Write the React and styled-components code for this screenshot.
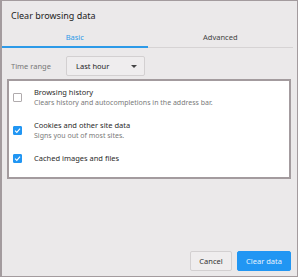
import React, { useState } from 'react';
import styled, { createGlobalStyle } from 'styled-components';

const GlobalStyle = createGlobalStyle`
  html, body {
    margin: 0;
    padding: 0;
    background: #ffffff;
  }
  body {
    font-family: "Noto Sans", "DejaVu Sans", sans-serif;
  }
`;

const Dialog = styled.div`
  display: flex;
  flex-direction: column;
  box-sizing: border-box;
  width: 298px;
  height: 277px;
  border: 1px solid #a39b9e;
  border-left-width: 2px;
  background: #ebe9ea;
`;

const Title = styled.div`
  height: 26px;
  padding-left: 9px;
  display: flex;
  align-items: center;
  padding-top: 3px;
  box-sizing: border-box;
  font-size: 9px;
  color: #222;
`;

const Tabs = styled.div`
  display: flex;
  margin-right: 4px;
  border-bottom: 1px solid #d6d3d4;
`;

const Tab = styled.div`
  flex: 1;
  height: 19px;
  display: flex;
  align-items: center;
  justify-content: center;
  font-size: 7.5px;
  color: ${p => (p.$active ? '#2d9ae8' : '#444')};
  border-bottom: 2px solid ${p => (p.$active ? '#2d9ae8' : 'transparent')};
  margin-bottom: -1px;
  cursor: pointer;
`;

const Body = styled.div`
  flex: 1;
  display: flex;
  flex-direction: column;
  padding: 8px 6px 0 5px;
`;

const TimeRow = styled.div`
  display: flex;
  align-items: center;
  padding-left: 4px;
`;

const Label = styled.span`
  width: 55px;
  font-size: 7.5px;
  color: #777;
`;

const Select = styled.div`
  box-sizing: border-box;
  width: 79px;
  height: 20px;
  display: flex;
  align-items: center;
  justify-content: space-between;
  padding: 0 7px 0 9px;
  border: 1px solid #d3d0d1;
  border-radius: 2px;
  background: #efedee;
  font-size: 7.5px;
  color: #222;
`;

const Arrow = styled.span`
  width: 0;
  height: 0;
  border-left: 3px solid transparent;
  border-right: 3px solid transparent;
  border-top: 3px solid #444;
`;

const List = styled.div`
  margin-top: 3px;
  box-sizing: border-box;
  height: 100px;
  border: 2px solid #a39b9e;
  background: #fff;
  display: flex;
  flex-direction: column;
  padding: 6px 0 0 2px;
  gap: 12px;
`;

const Row = styled.label`
  display: flex;
  align-items: center;
  cursor: pointer;
`;

const Box = styled.span`
  box-sizing: border-box;
  flex: none;
  width: 9px;
  height: 9px;
  margin: 0 12px 0 2px;
  border-radius: 1px;
  border: 1px solid ${p => (p.$checked ? '#2196f3' : '#b0abad')};
  background: ${p => (p.$checked ? '#2196f3' : '#fff')};
  display: flex;
  align-items: center;
  justify-content: center;
`;

const Text = styled.div`
  display: flex;
  flex-direction: column;
  gap: 1px;
`;

const Name = styled.span`
  font-size: 7.5px;
  color: #2a2a2a;
  line-height: 10px;
`;

const Desc = styled.span`
  font-size: 7px;
  color: #7a7a7a;
  line-height: 10px;
`;

const Footer = styled.div`
  margin-top: auto;
  display: flex;
  justify-content: flex-end;
  gap: 5px;
  padding-bottom: 5px;
`;

const Button = styled.button`
  box-sizing: border-box;
  height: 20px;
  padding: 0;
  width: ${p => p.$w}px;
  border-radius: 2px;
  font-family: inherit;
  font-size: 7.5px;
  border: 1px solid ${p => (p.$primary ? '#2196f3' : '#d3d0d1')};
  background: ${p => (p.$primary ? '#2196f3' : '#efedee')};
  color: ${p => (p.$primary ? '#e8f3fd' : '#333')};
  cursor: pointer;
`;

const Check = () => (
  <svg width="7" height="7" viewBox="0 0 10 10">
    <path d="M1.5 5.2 L4 7.6 L8.6 2.4" fill="none" stroke="#fff" strokeWidth="1.6" />
  </svg>
);

const items = [
  { name: 'Browsing history', desc: 'Clears history and autocompletions in the address bar.', checked: false },
  { name: 'Cookies and other site data', desc: 'Signs you out of most sites.', checked: true },
  { name: 'Cached images and files', checked: true },
];

export default function App() {
  const [tab, setTab] = useState(0);
  const [checks, setChecks] = useState(items.map(i => i.checked));

  return (
    <>
      <GlobalStyle />
      <Dialog>
        <Title>Clear browsing data</Title>
        <Tabs>
          <Tab $active={tab === 0} onClick={() => setTab(0)}>Basic</Tab>
          <Tab $active={tab === 1} onClick={() => setTab(1)}>Advanced</Tab>
        </Tabs>
        <Body>
          <TimeRow>
            <Label>Time range</Label>
            <Select>
              Last hour
              <Arrow />
            </Select>
          </TimeRow>
          <List>
            {items.map((it, i) => (
              <Row
                key={it.name}
                onClick={() => setChecks(c => c.map((v, j) => (j === i ? !v : v)))}
              >
                <Box $checked={checks[i]}>{checks[i] && <Check />}</Box>
                <Text>
                  <Name>{it.name}</Name>
                  {it.desc && <Desc>{it.desc}</Desc>}
                </Text>
              </Row>
            ))}
          </List>
          <Footer>
            <Button $w={42}>Cancel</Button>
            <Button $primary $w={54}>Clear data</Button>
          </Footer>
        </Body>
      </Dialog>
    </>
  );
}
